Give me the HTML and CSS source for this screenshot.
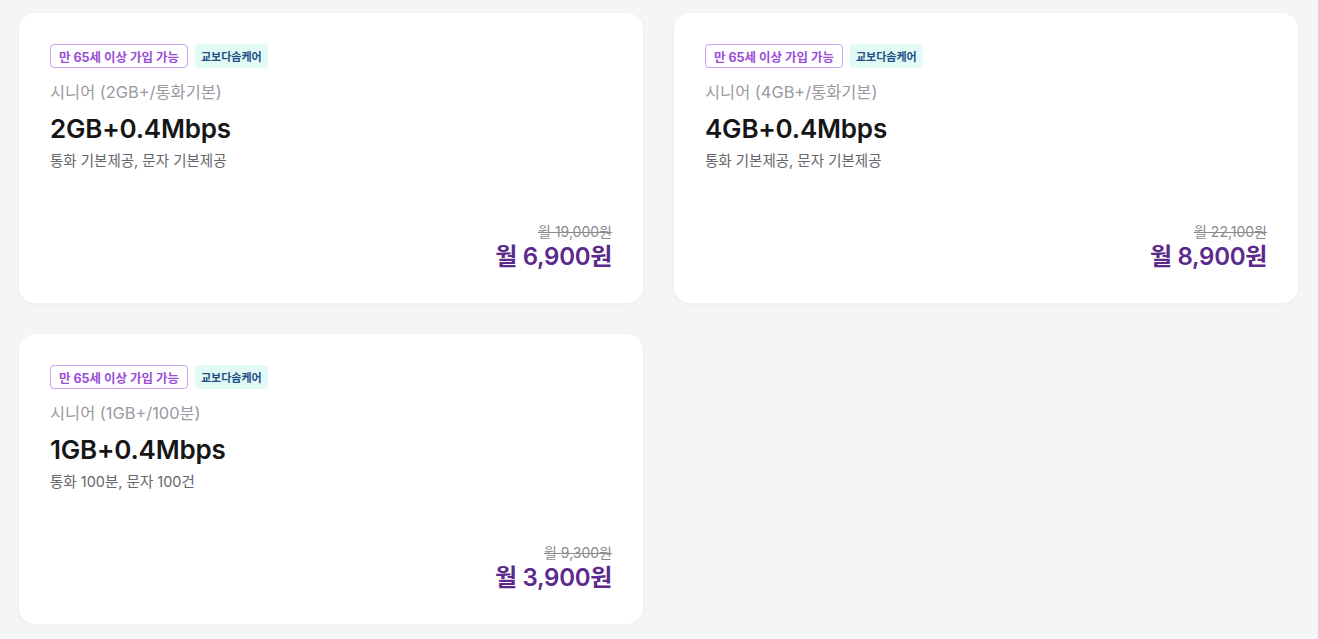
FILE: index.html
```html
<!DOCTYPE html>
<html lang="ko">
<head>
<meta charset="utf-8">
<title>시니어 요금제</title>
<link rel="stylesheet" href="styles.css">
</head>
<body>
<div class="grid">
  <div class="card">
    <div class="badges"><span class="badge age">만 65세 이상 가입 가능</span><span class="badge care">교보다솜케어</span></div>
    <div class="sub">시니어 (2GB+/통화기본)</div>
    <div class="title">2GB+0.4Mbps</div>
    <div class="desc">통화 기본제공, 문자 기본제공</div>
    <div class="price"><div class="orig">월 19,000원</div><div class="now">월 6,900원</div></div>
  </div>
  <div class="card">
    <div class="badges"><span class="badge age">만 65세 이상 가입 가능</span><span class="badge care">교보다솜케어</span></div>
    <div class="sub">시니어 (4GB+/통화기본)</div>
    <div class="title">4GB+0.4Mbps</div>
    <div class="desc">통화 기본제공, 문자 기본제공</div>
    <div class="price"><div class="orig">월 22,100원</div><div class="now">월 8,900원</div></div>
  </div>
  <div class="card">
    <div class="badges"><span class="badge age">만 65세 이상 가입 가능</span><span class="badge care">교보다솜케어</span></div>
    <div class="sub">시니어 (1GB+/100분)</div>
    <div class="title">1GB+0.4Mbps</div>
    <div class="desc">통화 100분, 문자 100건</div>
    <div class="price"><div class="orig">월 9,300원</div><div class="now">월 3,900원</div></div>
  </div>
</div>
</body>
</html>
```
FILE: styles.css
```css
html, body {
  margin: 0;
  padding: 0;
  background: #f4f5f7;
  font-family: "Inter", "Noto Sans CJK KR", sans-serif;
}
.grid {
  display: grid;
  grid-template-columns: 1fr 1fr;
  column-gap: 31px;
  row-gap: 31px;
  padding: 13px 20px 0 19px;
}
.card {
  background: #fff;
  border-radius: 16px;
  height: 290px;
  box-sizing: border-box;
  padding: 31px 31px 30px 31px;
  display: flex;
  flex-direction: column;
  box-shadow: 0 1px 4px rgba(0, 0, 0, 0.04);
}
.badges {
  display: flex;
  gap: 7px;
  height: 24px;
}
.badge {
  display: inline-flex;
  align-items: center;
  height: 24px;
  box-sizing: border-box;
  border-radius: 4px;
  font-weight: 700;
}
.badge.age {
  border: 1px solid #c9a3f0;
  color: #9b4fd9;
  font-size: 12.5px;
  padding: 0 8px;
}
.badge.care {
  background: #e2faf5;
  color: #1f4f85;
  font-size: 11px;
  padding: 0 6px;
}
.sub {
  margin-top: 13px;
  font-size: 16.4px;
  line-height: 22px;
  color: #9a9aa2;
}
.title {
  margin-top: 10px;
  font-size: 26px;
  line-height: 32px;
  font-weight: 600;
  color: #161616;
  letter-spacing: -0.2px;
}
.desc {
  margin-top: 6px;
  font-size: 14.5px;
  line-height: 20px;
  color: #66666c;
}
.price {
  margin-top: auto;
  text-align: right;
}
.orig {
  font-size: 14px;
  line-height: 18px;
  color: #8a8a8f;
  text-decoration: line-through;
}
.now {
  font-size: 24px;
  line-height: 32px;
  font-weight: 600;
  color: #5b2a8c;
  letter-spacing: -0.3px;
}
```
